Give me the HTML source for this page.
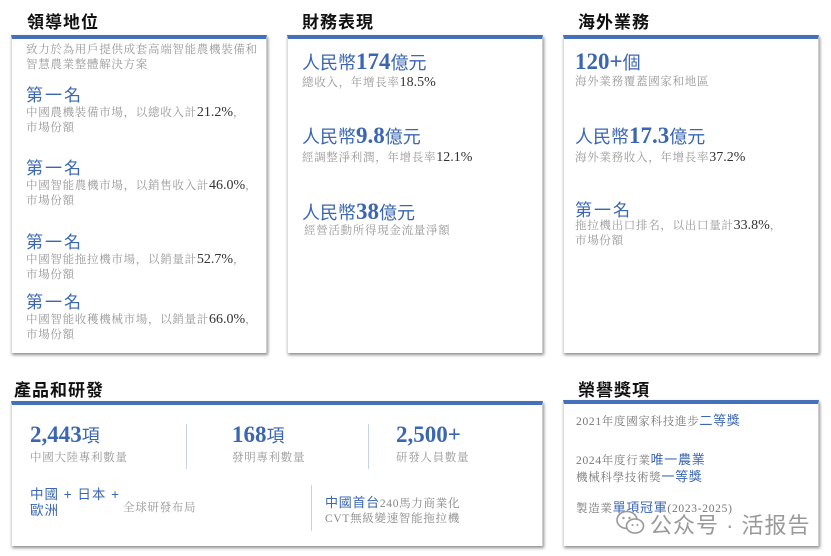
<!DOCTYPE html>
<html><head><meta charset="utf-8"><style>
body{margin:0;width:831px;height:556px;background:#fff;position:relative;overflow:hidden;font-family:"Liberation Serif","Noto Serif CJK SC",serif;}
.a{position:absolute;white-space:nowrap;}
.t{font-family:"Liberation Sans","Noto Sans CJK TC",sans-serif;font-weight:bold;font-size:17px;color:#111;letter-spacing:1px;}
.p{position:absolute;background:#fff;border-top:4px solid #4471b8;box-shadow:1px 2px 3px rgba(0,0,0,.45);box-sizing:border-box;border-left:1px solid #ddd;border-right:1px solid #ccc;}
.g{font-size:11.5px;color:#999;letter-spacing:.7px;line-height:15px;}
.g b{font-weight:normal;color:#333;font-size:14px;letter-spacing:0;}
.h{font-family:"Liberation Sans","Noto Sans CJK TC",sans-serif;color:#3a66b2;font-size:17px;letter-spacing:2px;}
.big{color:#3a66b2;font-size:18px;font-family:"Liberation Sans","Noto Sans CJK TC",sans-serif;}
.big b{font-family:"Liberation Serif",serif;font-size:23px;}
.v{position:absolute;width:1px;background:#c8d3e6;}
</style></head><body>
<div class="a t" style="left:27px;top:8px">領導地位</div>
<div class="a t" style="left:302px;top:8px">財務表現</div>
<div class="a t" style="left:578px;top:8px">海外業務</div>
<div class="a t" style="left:14px;top:376px">產品和研發</div>
<div class="a t" style="left:578px;top:376px">榮譽獎項</div>

<div class="p" style="left:11px;top:35px;width:256px;height:318px"></div>
<div class="p" style="left:287px;top:35px;width:256px;height:318px"></div>
<div class="p" style="left:563px;top:35px;width:256px;height:318px"></div>
<div class="p" style="left:11px;top:401px;width:532px;height:145px"></div>
<div class="p" style="left:563px;top:400px;width:256px;height:146px"></div>

<div class="a g" style="left:26px;top:43px">致力於為用戶提供成套高端智能農機裝備和<br>智慧農業整體解決方案</div>
<div class="a h" style="left:26px;top:81px">第一名</div>
<div class="a g" style="left:26px;top:105px">中國農機裝備市場，以總收入計<b>21.2%</b>，<br>市場份額</div>
<div class="a h" style="left:26px;top:154px">第一名</div>
<div class="a g" style="left:26px;top:178px">中國智能農機市場，以銷售收入計<b>46.0%</b>，<br>市場份額</div>
<div class="a h" style="left:26px;top:228px">第一名</div>
<div class="a g" style="left:26px;top:252px">中國智能拖拉機市場，以銷量計<b>52.7%</b>，<br>市場份額</div>
<div class="a h" style="left:26px;top:288px">第一名</div>
<div class="a g" style="left:26px;top:312px">中國智能收穫機械市場，以銷量計<b>66.0%</b>，<br>市場份額</div>

<div class="a big" style="left:302px;top:49px">人民幣<b>174</b>億元</div>
<div class="a g" style="left:302px;top:75px">總收入，年增長率<b>18.5%</b></div>
<div class="a big" style="left:302px;top:123px">人民幣<b>9.8</b>億元</div>
<div class="a g" style="left:302px;top:150px">經調整淨利潤，年增長率<b>12.1%</b></div>
<div class="a big" style="left:302px;top:199px">人民幣<b>38</b>億元</div>
<div class="a g" style="left:304px;top:224px">經營活動所得現金流量淨額</div>

<div class="a big" style="left:575px;top:49px"><b>120+</b>個</div>
<div class="a g" style="left:575px;top:75px">海外業務覆蓋國家和地區</div>
<div class="a big" style="left:575px;top:123px">人民幣<b>17.3</b>億元</div>
<div class="a g" style="left:575px;top:150px">海外業務收入，年增長率<b>37.2%</b></div>
<div class="a h" style="left:575px;top:196px">第一名</div>
<div class="a g" style="left:575px;top:218px">拖拉機出口排名，以出口量計<b>33.8%</b>，<br>市場份額</div>

<div class="a big" style="left:30px;top:422px"><b>2,443</b>項</div>
<div class="a g" style="left:30px;top:451px">中國大陸專利數量</div>
<div class="v" style="left:186px;top:424px;height:45px"></div>
<div class="a big" style="left:232px;top:422px"><b>168</b>項</div>
<div class="a g" style="left:232px;top:451px">發明專利數量</div>
<div class="v" style="left:368px;top:424px;height:45px"></div>
<div class="a big" style="left:396px;top:422px"><b>2,500+</b></div>
<div class="a g" style="left:396px;top:451px">研發人員數量</div>
<div class="a h" style="left:30px;top:487px;font-size:13.5px;line-height:16px;letter-spacing:1px">中國 + 日本 +<br>歐洲</div>
<div class="a g" style="left:123px;top:501px">全球研發布局</div>
<div class="v" style="left:311px;top:485px;height:46px"></div>
<div class="a g" style="left:325px;top:495px;color:#888;"><span style="color:#3a66b2;font-family:'Liberation Sans','Noto Sans CJK TC',sans-serif;font-size:13px">中國首台</span>240馬力商業化<br>CVT無級變速智能拖拉機</div>

<div class="a g" style="left:576px;top:413px;color:#777">2021年度國家科技進步<span style="color:#3a66b2;font-size:13px;font-family:'Liberation Sans','Noto Sans CJK TC',sans-serif">二等獎</span></div>
<div class="a g" style="left:576px;top:452px;color:#777;line-height:15px">2024年度行業<span style="color:#3a66b2;font-size:13px;font-family:'Liberation Sans','Noto Sans CJK TC',sans-serif">唯一農業</span><br>機械科學技術獎<span style="color:#3a66b2;font-size:13px;font-family:'Liberation Sans','Noto Sans CJK TC',sans-serif">一等獎</span></div>
<div class="a g" style="left:576px;top:500px;color:#777">製造業<span style="color:#3a66b2;font-size:13px;font-family:'Liberation Sans','Noto Sans CJK TC',sans-serif">單項冠軍</span>(2023-2025)</div>

<svg class="a" style="left:616px;top:510px" width="30" height="26" viewBox="0 0 30 26"><ellipse cx="11" cy="10" rx="10" ry="8.5" fill="none" stroke="#999" stroke-width="1.6"/><ellipse cx="19" cy="16" rx="8.5" ry="7" fill="#fff" stroke="#999" stroke-width="1.6"/><circle cx="7.5" cy="8" r="1.2" fill="#999"/><circle cx="13.5" cy="8" r="1.2" fill="#999"/><circle cx="16.5" cy="15" r="1" fill="#999"/><circle cx="21.5" cy="15" r="1" fill="#999"/></svg>
<div class="a" style="left:650px;top:508px;font-family:'Liberation Sans','Noto Sans CJK SC',sans-serif;font-size:22px;color:#999;letter-spacing:1px">公众号 · 活报告</div>
</body></html>
